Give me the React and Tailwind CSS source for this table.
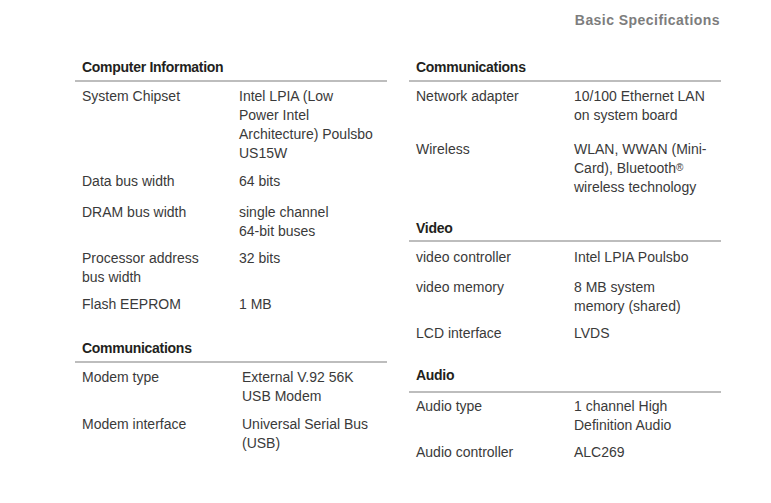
const left = [
  {
    title: "Computer Information",
    mt: "mt-0",
    pb: "pb-[3px]",
    valueCol: "grid-cols-[157px_1fr]",
    rows: [
      { label: ["System Chipset"], value: ["Intel LPIA (Low", "Power Intel", "Architecture) Poulsbo", "US15W"], mt: "mt-[5px]" },
      { label: ["Data bus width"], value: ["64 bits"], mt: "mt-[9px]" },
      { label: ["DRAM bus width"], value: ["single channel", "64-bit buses"], mt: "mt-[12px]" },
      { label: ["Processor address", "bus width"], value: ["32 bits"], mt: "mt-[8px]" },
      { label: ["Flash EEPROM"], value: ["1 MB"], mt: "mt-[8px]" },
    ],
  },
  {
    title: "Communications",
    mt: "mt-[25px]",
    pb: "pb-[3px]",
    valueCol: "grid-cols-[160px_1fr]",
    rows: [
      { label: ["Modem type"], value: ["External V.92 56K", "USB Modem"], mt: "mt-[5px]" },
      { label: ["Modem interface"], value: ["Universal Serial Bus", "(USB)"], mt: "mt-[9px]" },
    ],
  },
];

const right = [
  {
    title: "Communications",
    mt: "mt-0",
    pb: "pb-[3px]",
    valueCol: "grid-cols-[158px_1fr]",
    rows: [
      { label: ["Network adapter"], value: ["10/100 Ethernet LAN", "on system board"], mt: "mt-[5px]" },
      {
        label: ["Wireless"],
        value: [
          "WLAN, WWAN (Mini-",
          <>
            Card), Bluetooth<sup className="text-[10px] relative -top-[2px]">®</sup>
          </>,
          "wireless technology",
        ],
        mt: "mt-[15px]",
      },
    ],
  },
  {
    title: "Video",
    mt: "mt-[22px]",
    pb: "pb-[2px]",
    valueCol: "grid-cols-[158px_1fr]",
    rows: [
      { label: ["video controller"], value: ["Intel LPIA Poulsbo"], mt: "mt-[6px]" },
      { label: ["video memory"], value: ["8 MB system", "memory (shared)"], mt: "mt-[11px]" },
      { label: ["LCD interface"], value: ["LVDS"], mt: "mt-[8px]" },
    ],
  },
  {
    title: "Audio",
    mt: "mt-[23px]",
    pb: "pb-[6px]",
    valueCol: "grid-cols-[158px_1fr]",
    rows: [
      { label: ["Audio type"], value: ["1 channel High", "Definition Audio"], mt: "mt-[4px]" },
      { label: ["Audio controller"], value: ["ALC269"], mt: "mt-[8px]" },
    ],
  },
];

function Section({ section }) {
  return (
    <div className={section.mt}>
      <div className={`border-b-2 border-[#bdbdbd] pl-[7px] ${section.pb}`}>
        <h3 className="text-[14px] font-bold text-[#231f20] tracking-[-0.02em] leading-[19px]">
          {section.title}
        </h3>
      </div>
      {section.rows.map((row, i) => (
        <div key={i} className={`grid ${section.valueCol} pl-[7px] ${row.mt}`}>
          <div>
            {row.label.map((l, j) => (
              <div key={j} className="whitespace-nowrap">{l}</div>
            ))}
          </div>
          <div>
            {row.value.map((v, j) => (
              <div key={j} className="whitespace-nowrap">{v}</div>
            ))}
          </div>
        </div>
      ))}
    </div>
  );
}

export default function App() {
  return (
    <div
      className="w-[771px] h-[503px] bg-white text-[#3a3a3a] text-[14px] leading-[19px]"
      style={{ fontFamily: '"Liberation Sans", Arial, sans-serif' }}
    >
      <div className="pt-[11px] pr-[51px] text-right">
        <span className="font-bold text-[#7d7d7d] tracking-[0.45px]">Basic Specifications</span>
      </div>

      <div className="flex gap-[22px] pl-[75px] mt-[28px]">
        <div className="w-[312px]">
          {left.map((s, i) => (
            <Section key={i} section={s} />
          ))}
        </div>
        <div className="w-[312px]">
          {right.map((s, i) => (
            <Section key={i} section={s} />
          ))}
        </div>
      </div>
    </div>
  );
}
